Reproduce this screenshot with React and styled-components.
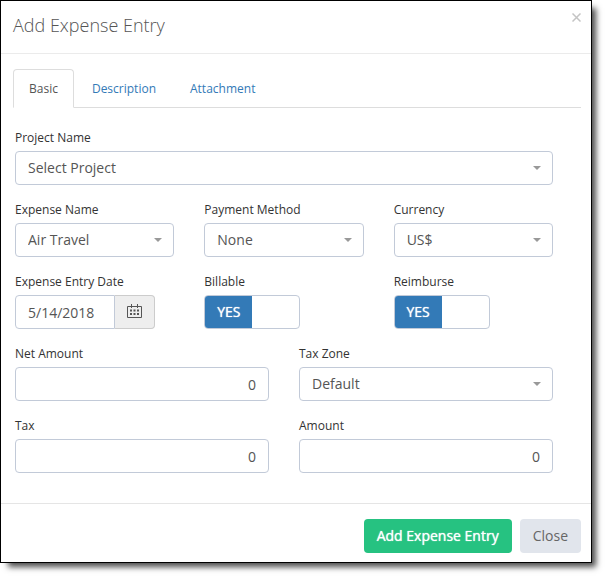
import React, { Component } from 'react'
import styled, { createGlobalStyle } from 'styled-components'

const GlobalStyle = createGlobalStyle`
  * {
    box-sizing: border-box;
  }

  body {
    margin: 0;
    background: #fff;
    color: #333;
    font-family: 'Open Sans', 'Noto Sans', sans-serif;
    font-size: 14px;
    line-height: 20px;
  }

  button, input, select {
    font: inherit;
    margin: 0;
  }
`;

const Dialog = styled.section`
  margin: 0 15px 15px 0;
  background: #fff;
  border: 1px solid #000;
  box-shadow: 6px 6px 6px -2px rgba(0, 0, 0, 0.7);
`;

const Header = styled.header`
  display: flex;
  justify-content: space-between;
  align-items: flex-start;
  padding: 12px 10px 15px 12px;
  border-bottom: 1px solid #ebebeb;
`;

const Title = styled.h1`
  margin: 0;
  color: #555;
  font-size: 18px;
  font-weight: 300;
  line-height: 25px;
`;

const CloseIcon = styled.button`
  display: block;
  padding: 0;
  border: 0;
  background: none;
  color: #c4c4c4;
  cursor: pointer;

  svg {
    display: block;
  }
`;

const Tabs = styled.nav`
  display: flex;
  gap: 2px;
  margin: 15px 10px 0 12px;
  border-bottom: 1px solid #ddd;
`;

const Tab = styled.a`
  margin-bottom: -1px;
  padding: 9px 15px 8px;
  border: 1px solid ${props => props.$active ? '#ddd' : 'transparent'};
  border-bottom-color: ${props => props.$active ? '#fff' : 'transparent'};
  border-radius: 4px 4px 0 0;
  background: ${props => props.$active ? '#fff' : 'transparent'};
  color: ${props => props.$active ? '#555' : '#337ab7'};
  font-size: 12px;
  text-decoration: none;
`;

const Form = styled.form`
  display: flex;
  flex-direction: column;
  gap: 15px;
  padding: 20px 38px 30px 14px;
`;

const Row = styled.div`
  display: grid;
  grid-template-columns: repeat(${props => props.$columns}, 1fr);
  gap: 30px;
`;

const Field = styled.div`
  display: flex;
  flex-direction: column;
  gap: 3px;
  min-width: 0;
`;

const Label = styled.label`
  color: #333;
  font-size: 12px;
`;

const TextInput = styled.input`
  width: 100%;
  height: 34px;
  padding: 0 12px;
  border: 1px solid #c2cad8;
  border-radius: 4px;
  background: #fff;
  color: #555;
  text-align: ${props => props.$align || 'left'};
`;

const SelectBox = styled.div`
  display: grid;
  align-items: center;

  > * {
    grid-area: 1 / 1;
  }

  svg {
    justify-self: end;
    margin-right: 12px;
    pointer-events: none;
  }
`;

const SelectInput = styled.select`
  appearance: none;
  width: 100%;
  height: 34px;
  padding: 0 30px 0 12px;
  border: 1px solid #c2cad8;
  border-radius: 4px;
  background: #fff;
  color: #555;
`;

const DateGroup = styled.div`
  display: flex;
  width: 140px;

  ${TextInput} {
    flex: 1;
    min-width: 0;
    border-radius: 4px 0 0 4px;
  }
`;

const DateButton = styled.button`
  display: flex;
  flex: none;
  justify-content: center;
  align-items: center;
  width: 40px;
  height: 34px;
  padding: 0 0 2px;
  border: 1px solid #ccc;
  border-left: 0;
  border-radius: 0 4px 4px 0;
  background: #eee;
  color: #555;
  cursor: pointer;
`;

const Switch = styled.div`
  display: grid;
  width: 96px;
  height: 34px;
  border: 1px solid #c2cad8;
  border-radius: 4px;
  overflow: hidden;

  > * {
    grid-area: 1 / 1;
  }

  input {
    appearance: none;
    width: 100%;
    height: 100%;
    cursor: pointer;
  }
`;

const SwitchHandle = styled.span`
  justify-self: ${props => props.$on ? 'start' : 'end'};
  width: 50%;
  background: ${props => props.$on ? '#337ab7' : '#eee'};
  color: ${props => props.$on ? '#fff' : '#555'};
  line-height: 32px;
  text-align: center;
  text-shadow: 0 0 1px currentColor;
  pointer-events: none;
`;

const Footer = styled.footer`
  display: flex;
  justify-content: flex-end;
  gap: 8px;
  padding: 15px 10px 9px;
  border-top: 1px solid #e5e5e5;
`;

const Button = styled.button`
  height: 34px;
  padding: 0 13px;
  border: 0;
  border-radius: 4px;
  background: ${props => props.$primary ? '#26c281' : '#e1e5ec'};
  color: ${props => props.$primary ? '#fff' : '#666'};
  text-shadow: ${props => props.$primary ? '0 0 1px currentColor' : 'none'};
  cursor: pointer;
`;

const SelectField = ({ id, label, options }) => (
  <Field>
    <Label htmlFor={id}>{label}</Label>
    <SelectBox>
      <SelectInput id={id}>
        {options.map(option => <option key={option}>{option}</option>)}
      </SelectInput>
      <svg width="8" height="4" viewBox="0 0 8 4">
        <path d="M0 0h8L4 4z" fill="#999" />
      </svg>
    </SelectBox>
  </Field>
)

const AmountField = ({ id, label, value, onChange }) => (
  <Field>
    <Label htmlFor={id}>{label}</Label>
    <TextInput id={id} name={id} type="text" $align="right" value={value} onChange={onChange} />
  </Field>
)

const SwitchField = ({ id, label, checked, onChange }) => (
  <Field>
    <Label htmlFor={id}>{label}</Label>
    <Switch>
      <input id={id} name={id} type="checkbox" checked={checked} onChange={onChange} />
      <SwitchHandle $on={checked}>{checked ? 'YES' : 'NO'}</SwitchHandle>
    </Switch>
  </Field>
)

const CalendarIcon = () => (
  <svg width="15" height="15" viewBox="0 0 15 15" fill="none" stroke="currentColor">
    <path d="M.5 2.5h14v11H.5z" />
    <path d="M4.5 0v4M10.5 0v4" />
    <path d="M3 6.5h2M6.5 6.5h2M10 6.5h2M3 10h2M6.5 10h2M10 10h2" strokeWidth="2" />
  </svg>
)

class App extends Component {
  state = {
    date: '5/14/2018',
    billable: true,
    reimburse: true,
    netAmount: '0',
    tax: '0',
    amount: '0'
  }

  handleChange = (e) => {
    const { name, type, checked, value } = e.target;
    this.setState({ [name]: type === 'checkbox' ? checked : value });
  }

  render() {
    const { date, billable, reimburse, netAmount, tax, amount } = this.state;
    return (
      <Dialog role="dialog" aria-labelledby="title">
        <GlobalStyle />
        <Header>
          <Title id="title">Add Expense Entry</Title>
          <CloseIcon type="button" aria-label="Close">
            <svg width="9" height="9" viewBox="0 0 9 9" stroke="currentColor" strokeWidth="1.5">
              <path d="M.5.5l8 8M8.5.5l-8 8" />
            </svg>
          </CloseIcon>
        </Header>
        <Tabs>
          <Tab href="#basic" $active>Basic</Tab>
          <Tab href="#description">Description</Tab>
          <Tab href="#attachment">Attachment</Tab>
        </Tabs>
        <Form id="basic">
          <Row $columns={1}>
            <SelectField id="project" label="Project Name" options={['Select Project']} />
          </Row>
          <Row $columns={3}>
            <SelectField id="expense" label="Expense Name" options={['Air Travel']} />
            <SelectField id="payment" label="Payment Method" options={['None']} />
            <SelectField id="currency" label="Currency" options={['US$']} />
          </Row>
          <Row $columns={3}>
            <Field>
              <Label htmlFor="date">Expense Entry Date</Label>
              <DateGroup>
                <TextInput id="date" name="date" type="text" value={date} onChange={this.handleChange} />
                <DateButton type="button" aria-label="Pick a date">
                  <CalendarIcon />
                </DateButton>
              </DateGroup>
            </Field>
            <SwitchField id="billable" label="Billable" checked={billable} onChange={this.handleChange} />
            <SwitchField id="reimburse" label="Reimburse" checked={reimburse} onChange={this.handleChange} />
          </Row>
          <Row $columns={2}>
            <AmountField id="netAmount" label="Net Amount" value={netAmount} onChange={this.handleChange} />
            <SelectField id="taxZone" label="Tax Zone" options={['Default']} />
          </Row>
          <Row $columns={2}>
            <AmountField id="tax" label="Tax" value={tax} onChange={this.handleChange} />
            <AmountField id="amount" label="Amount" value={amount} onChange={this.handleChange} />
          </Row>
        </Form>
        <Footer>
          <Button type="submit" form="basic" $primary>Add Expense Entry</Button>
          <Button type="button">Close</Button>
        </Footer>
      </Dialog>
    )
  }
}

export default App
